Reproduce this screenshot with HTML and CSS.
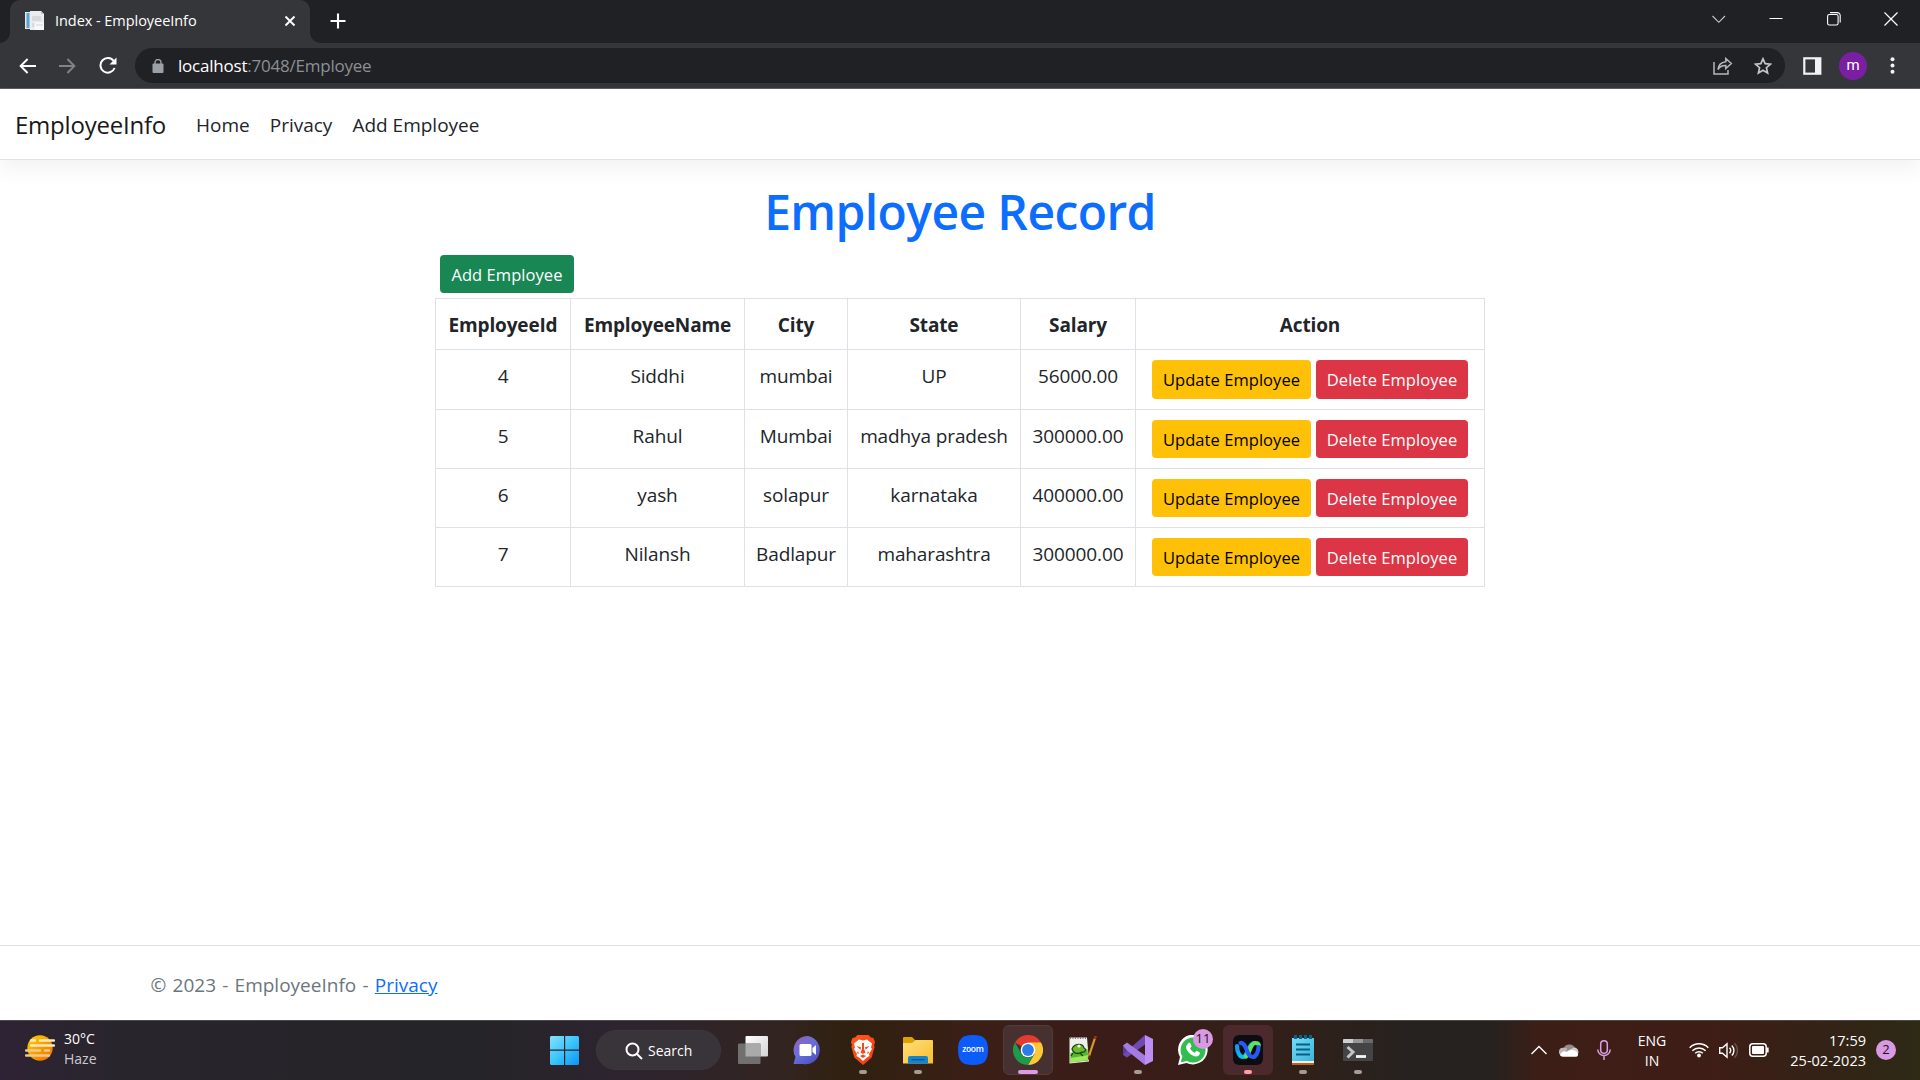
FILE: index.html
```html
<!DOCTYPE html>
<html lang="en">
<head>
<meta charset="utf-8">
<title>Index - EmployeeInfo</title>
<link rel="stylesheet" href="styles.css">
</head>
<body>
<div class="tabstrip">
  <div class="tab">
    <svg class="favicon" width="20" height="20" viewBox="0 0 20 20"><path d="M0 1h5v17H0z" fill="#dfe9ee"/><path d="M1.500 2h3v15h-3z" fill="#5aa3cf"/><path d="M5 0h11l3 3v16H5z" fill="#ececee"/><path d="M16 0v3h3z" fill="#bfc3c8"/><path d="M7 5h9v5H7zM7 12h3v4H7z" fill="#d7d9dd"/><path d="M9.500 11.500H19V19H9.500z" fill="#f8f8f8"/><path d="M11 14h7" stroke="#d0d3d8"/></svg>
    <span class="tab-title">Index - EmployeeInfo</span>
    <svg class="tab-close" width="12" height="12" viewBox="0 0 12 12"><path d="M1.500 1.500l9 9M10.500 1.500l-9 9" stroke="#fff" stroke-width="1.900"/></svg>
  </div>
  <svg class="new-tab" width="16" height="16" viewBox="0 0 16 16"><path d="M8 .5v15M.5 8h15" stroke="#fff" stroke-width="2.100"/></svg>
  <div class="window-controls">
    <svg width="14" height="14" viewBox="0 0 14 14"><path d="M.5 4l6.300 6.300L13 4" fill="none" stroke="#c9cacc" stroke-width="1.100"/></svg>
    <svg width="14" height="14" viewBox="0 0 14 14"><path d="M.5 6.500h13" stroke="#fff"/></svg>
    <svg width="14" height="14" viewBox="0 0 14 14"><rect x=".6" y="2.500" width="10.500" height="10.500" rx="1.800" fill="none" stroke="#fff" stroke-width="1.100"/><path d="M3 .6h7.200a3 3 0 0 1 3 3v7" fill="none" stroke="#fff" stroke-width="1.100"/></svg>
    <svg width="14" height="14" viewBox="0 0 14 14"><path d="M.5.5l13 13M13.500.5l-13 13" stroke="#fff" stroke-width="1.200"/></svg>
  </div>
</div>
<div class="toolbar">
  <svg class="nav-icon" width="17" height="16" viewBox="0 0 17 16"><path d="M17 8H1.600M8.600 1L1.600 8l7 7" fill="none" stroke="#fff" stroke-width="1.900"/></svg>
  <svg class="nav-icon forward" width="17" height="16" viewBox="0 0 17 16"><path d="M0 8h15.400M8.400 1l7 7-7 7" fill="none" stroke="#828386" stroke-width="1.900"/></svg>
  <svg class="nav-icon reload" width="18" height="17" viewBox="0 0 18 17"><path d="M14.800 4.200A7.300 7.300 0 1 0 15.600 11" fill="none" stroke="#fff" stroke-width="2"/><path d="M17.500.5v7h-7z" fill="#fff"/></svg>
  <div class="omnibox">
    <svg width="12" height="14" viewBox="0 0 12 14"><rect x=".5" y="4.500" width="11" height="9.500" rx="1" fill="#9aa0a6"/><path d="M3 5V3.500a3 3 0 0 1 6 0V5" fill="none" stroke="#9aa0a6" stroke-width="1.400"/></svg>
    <span class="url"><b>localhost</b>:7048/Employee</span>
    <svg class="share" width="20" height="18" viewBox="0 0 20 18"><path d="M1 5v12h14v-4" fill="none" stroke="#b5b7ba" stroke-width="1.500"/><path d="M12.800 1.500L18.300 6.500l-5.500 5V8.600C9 8.500 6.600 9.800 5 12.500c.4-4.500 3-7.200 7.800-7.800z" fill="none" stroke="#b5b7ba" stroke-width="1.500"/></svg>
    <svg class="star" width="18" height="18" viewBox="0 0 18 18"><path d="M9 1.800l2.150 4.900 5.250.5-4 3.500 1.200 5.200L9 13.200l-4.600 2.700 1.200-5.200-4-3.500 5.250-.5z" fill="none" stroke="#c3c5c8" stroke-width="1.700"/></svg>
  </div>
  <svg class="panel" width="19" height="18" viewBox="0 0 19 18"><rect x="1.300" y="1.300" width="16" height="15.400" fill="none" stroke="#f1f3f4" stroke-width="2.200"/><path d="M12 1h6v16h-6z" fill="#f1f3f4"/></svg>
  <span class="avatar">m</span>
  <svg class="dots" width="5" height="17" viewBox="0 0 5 17"><g fill="#f1f3f4"><circle cx="2.500" cy="2.200" r="2"/><circle cx="2.500" cy="8.500" r="2"/><circle cx="2.500" cy="14.800" r="2"/></g></svg>
</div>

<div class="page">
  <header class="navbar">
    <a class="brand">EmployeeInfo</a>
    <a class="link">Home</a>
    <a class="link">Privacy</a>
    <a class="link">Add Employee</a>
  </header>
  <main class="content">
    <h1>Employee Record</h1>
    <a class="btn success">Add Employee</a>
    <table>
      <colgroup><col class="c-id"><col class="c-name"><col class="c-city"><col class="c-state"><col class="c-salary"><col class="c-action"></colgroup>
      <thead><tr><th>EmployeeId</th><th>EmployeeName</th><th>City</th><th>State</th><th>Salary</th><th>Action</th></tr></thead>
      <tbody>
        <tr><td>4</td><td>Siddhi</td><td>mumbai</td><td>UP</td><td>56000.00</td><td class="actions"><a class="btn warning">Update Employee</a><a class="btn danger">Delete Employee</a></td></tr>
        <tr><td>5</td><td>Rahul</td><td>Mumbai</td><td>madhya pradesh</td><td>300000.00</td><td class="actions"><a class="btn warning">Update Employee</a><a class="btn danger">Delete Employee</a></td></tr>
        <tr><td>6</td><td>yash</td><td>solapur</td><td>karnataka</td><td>400000.00</td><td class="actions"><a class="btn warning">Update Employee</a><a class="btn danger">Delete Employee</a></td></tr>
        <tr><td>7</td><td>Nilansh</td><td>Badlapur</td><td>maharashtra</td><td>300000.00</td><td class="actions"><a class="btn warning">Update Employee</a><a class="btn danger">Delete Employee</a></td></tr>
      </tbody>
    </table>
  </main>
  <footer class="footer">© 2023 - EmployeeInfo - <a class="foot-link">Privacy</a></footer>
</div>

<div class="taskbar">
  <div class="weather">
    <svg width="30" height="26" viewBox="0 0 30 26"><defs><linearGradient id="sun" x1="0" y1="0" x2="1" y2="1"><stop offset=".15" stop-color="#fcc400"/><stop offset="1" stop-color="#ec6a00"/></linearGradient></defs><circle cx="15" cy="13" r="12.700" fill="url(#sun)"/><g stroke-width="2.400" stroke-linecap="round" fill="none"><path d="M6 5.500h4M15 5.500h14M6 10.500h23" stroke="#fbe9bd"/><path d="M1 15.500h14M20 15.500h4M1 20.500h23" stroke="#efc98c"/></g></svg>
    <div class="weather-text"><span>30°C</span><span class="dim">Haze</span></div>
  </div>
  <div class="apps">
    <svg class="start" width="30" height="30" viewBox="0 0 30 30"><defs><linearGradient id="win" x1="0" y1="0" x2="1" y2="1"><stop offset="0" stop-color="#84e2ff"/><stop offset=".5" stop-color="#3cc4fb"/><stop offset="1" stop-color="#0c94f6"/></linearGradient></defs><path d="M1 1H14V14.500H0V2zM15.200 1h12.800l1 1V14.500H15.200zM0 15.700h14v14.200H1l-1-1zM15.200 15.700H29v13.200l-1 1H15.200z" fill="url(#win)"/></svg>
    <div class="search"><svg width="18" height="18" viewBox="0 0 18 18"><circle cx="7.500" cy="7.500" r="6" fill="none" stroke="#fff" stroke-width="2"/><path d="M12 12l5 5" stroke="#fff" stroke-width="2"/></svg><span>Search</span></div>
    <div class="slot"><svg width="30" height="30" viewBox="0 0 30 30"><defs><linearGradient id="tv" x1="0" y1="0" x2="1" y2="1"><stop offset="0" stop-color="#fff"/><stop offset="1" stop-color="#d4d4d4"/></linearGradient></defs><rect x="7.500" y="1" width="22.500" height="20.500" rx="1" fill="url(#tv)"/><rect x="0" y="8.500" width="22.500" height="20.500" rx="1" fill="#707070"/><path d="M7.500 8.500h15v13h-15z" fill="#aaa"/></svg></div>
    <div class="slot"><svg width="30" height="30" viewBox="0 0 30 30"><defs><linearGradient id="chat" x1="0" y1="0" x2=".8" y2="1"><stop offset="0" stop-color="#9a5fb5"/><stop offset=".5" stop-color="#6a6fd8"/><stop offset="1" stop-color="#4a52c0"/></linearGradient></defs><path d="M15 1a14 14 0 1 1-5 28H.5l2-7A14 14 0 0 1 15 1z" fill="url(#chat)"/><rect x="6.500" y="9" width="12" height="12" rx="1.500" fill="#fff"/><path d="M19.500 13l3.500-3v10l-3.500-3z" fill="#fff"/></svg></div>
    <div class="slot run"><svg width="30" height="30" viewBox="0 0 30 30"><defs><linearGradient id="brv" x1="0" y1="0" x2="1" y2="1"><stop offset="0" stop-color="#ff5a1c"/><stop offset="1" stop-color="#f23a12"/></linearGradient></defs><path d="M9.500 0h11l2.500 2.500 2.500.5 1.500 4-1 3.500.7 1-3 11-8.700 7.500-8.700-7.500-3-11 .7-1L3 7l1.500-4 2.500-.5z" fill="url(#brv)"/><path d="M15 5.500l4-1 5 4-1 4 1 1.500-3 5 .5 2-2.500 1.500L15 26l-4-3.500L8.500 21l.5-2-3-5L7 12.500 6 8.500l5-4z" fill="#fff"/><path d="M8.500 11l4.500 1.200-.6 2.600zM21.500 11L17 12.200l.6 2.600zM14 8h2v6l1.500 3.500L15 19l-2.500-1.500L14 14zM12 21l3-1.500 3 1.500-3 2zM10 16l1 3-2-1zM20 16l-1 3 2-1z" fill="#f4481b"/></svg></div>
    <div class="slot run"><svg width="30" height="30" viewBox="0 0 30 30"><defs><linearGradient id="fold" x1="0" y1="0" x2="1" y2="1"><stop offset="0" stop-color="#ffe07a"/><stop offset="1" stop-color="#f9bd2d"/></linearGradient></defs><path d="M0 3a1 1 0 0 1 1-1h8l3.500 3.500L9 9H0z" fill="#dfa000"/><path d="M0 8h9l3.500-3H29a1 1 0 0 1 1 1v22.500H0z" fill="url(#fold)"/><path d="M5 28.500V23a2 2 0 0 1 2-2h16a2 2 0 0 1 2 2v5.500z" fill="#1683cf"/><path d="M8.500 24.700h13" stroke="#075188" stroke-width="1.200"/></svg></div>
    <div class="slot"><svg width="30" height="30" viewBox="0 0 30 30"><path d="M15 0C26 0 30 4 30 15s-4 15-15 15S0 26 0 15 4 0 15 0z" fill="#0c5cfc"/><text x="15" y="17.300" text-anchor="middle" textLength="21.500" class="zoom-word">zoom</text></svg></div>
    <div class="slot active"><svg width="30" height="30" viewBox="0 0 30 30"><path d="M15 15L2 7.500A15 15 0 0 1 28 7.500z" fill="#e33b2e"/><path d="M15 7.500h13A15 15 0 0 1 15 30l6.500-11.200z" fill="#fcc934"/><path d="M2 7.500l6.500 11.300A7.500 7.500 0 0 0 21.500 18.800L15 30A15 15 0 0 1 2 7.500z" fill="#1e9a4a"/><circle cx="15" cy="15" r="7.300" fill="#fff"/><circle cx="15" cy="15" r="5.900" fill="#2b7de9"/></svg></div>
    <div class="slot"><svg width="30" height="30" viewBox="0 0 30 30"><path d="M1.500 2.500h17.500l2 24-19.500 2z" fill="#eef0ea"/><path d="M2.500 18l17-4 1 11.500-18 2z" fill="#56b62e"/><path d="M2.500 23l18-3v5l-18 2.500z" fill="#a1e65e"/><path d="M2 3h16" stroke="#777" stroke-width="2" stroke-dasharray="1 1.500"/><path d="M4 14c2-6 11-6 12-1 3 1 1 5-2 4-5 3-9 1-10-3zM5 18l-2 3M12 18l3 3" fill="#6dbd2a" stroke="#18420e" stroke-width="1.200"/><circle cx="11" cy="11" r="1.600" fill="#fff"/><path d="M27.500 1.500L22 18l-1.500 5" stroke="#d99a22" stroke-width="2.200" fill="none"/><path d="M27.600 1l-1 3" stroke="#9b2b20" stroke-width="2.200"/><path d="M21.500 20.500l-1 4" stroke="#463016" stroke-width="1.500"/></svg></div>
    <div class="slot run"><svg width="30" height="30" viewBox="0 0 30 30"><path d="M0 10.500L4 8v14.500L0 20z" fill="#5a3b9c"/><path d="M0 19.500L22 0v9.500L4 22.500z" fill="#7049b4"/><path d="M0 10.500L4 7.500 22 20.500V30L4 15.500z" fill="#a57be0"/><path d="M22 0l8 4v22l-8 4z" fill="#bd8ff6"/></svg></div>
    <div class="slot"><svg width="30" height="30" viewBox="0 0 30 30"><path d="M0 30l2-8A14.800 14.800 0 1 1 8.500 28z" fill="#fff"/><path d="M2.700 27.300l1.700-5.700A12.500 12.500 0 1 1 9 26z" fill="#31bd4f"/><path d="M10 8.500c1-1 2-.8 2.600.3l1 2.500-1.500 2c1 2 2.500 3.500 4.700 4.500l1.800-2 3.200 1.600c.7.600-.5 3.400-2.600 3.900C14 22.300 7 15 8.200 11.200z" fill="#fff"/></svg><span class="badge count">11</span></div>
    <div class="slot alert"><svg width="30" height="30" viewBox="0 0 30 30"><defs><linearGradient id="wa" x1="0" y1="0" x2="1" y2="1"><stop offset="0" stop-color="#1590f0"/><stop offset="1" stop-color="#10d5e6"/></linearGradient></defs><rect width="30" height="30" rx="6" fill="#0b0d10"/><g fill="none" stroke-width="4.200" stroke-linecap="round"><path d="M4 11c0 5.500 2.500 11 6 11 4.500 0 5-13.500 11-14" stroke="url(#wa)"/><path d="M13 21.500c4-3 4-13.500 9.500-13.500 2 0 3 1 3.300 2" stroke="#5fe35f"/><path d="M7.500 8c6-1 6 14 12 14 3.500 0 6-5 6-10" stroke="#2858f5"/></g></svg></div>
    <div class="slot run"><svg width="30" height="30" viewBox="0 0 30 30"><defs><linearGradient id="np" x1="0" y1="0" x2="1" y2="1"><stop offset="0" stop-color="#72dcf5"/><stop offset="1" stop-color="#3db4dc"/></linearGradient></defs><path d="M4 27h22v3H4z" fill="#bd6217"/><path d="M4 26h22v2H4z" fill="#eee"/><path d="M4 3h22v23H4z" fill="url(#np)"/><path d="M8 9.500h14M8 14.500h14M8 19.500h14" stroke="#075f83" stroke-width="1.900"/><path d="M7.500 0v4M12.500 0v4M17.500 0v4M22.500 0v4" stroke="#08648a" stroke-width="3"/></svg></div>
    <div class="slot run"><svg width="30" height="30" viewBox="0 0 30 30"><rect y="4" width="30" height="22" rx="1" fill="#444447"/><path d="M0 8V5a1 1 0 0 1 1-1h9v4z" fill="#cfcfd1"/><path d="M10 4h10v4H10z" fill="#97979a"/><path d="M20 4h9a1 1 0 0 1 1 1v3H20z" fill="#6a6a6e"/><path d="M4.500 12l5.500 5-5.500 5.500" fill="none" stroke="#c4c4c4" stroke-width="3"/><path d="M13 21.500h10" stroke="#f5f5f5" stroke-width="2.800"/></svg></div>
  </div>
  <div class="tray">
    <svg width="16" height="10" viewBox="0 0 16 10"><path d="M.5 9L8 1.500 15.500 9" fill="none" stroke="#fff" stroke-width="1.400"/></svg>
    <svg class="t-cloud" width="20" height="14" viewBox="0 0 20 14"><path d="M4.500 6a6 5.500 0 0 1 11.500-1L9 10z" fill="#958b89"/><path d="M15 4.500A4.500 4.500 0 0 1 17 13L8 8z" fill="#d3cfce"/><path d="M4.500 4.800a4.500 4.500 0 0 1 4 1.200l-6 6.500a4 4 0 0 1 2-7.700z" fill="#bdb8b6"/><path d="M1 12c1-3 4-4.500 7-3.500l3.500-1.300c3-.6 6.500 1 7.500 3.800.3 1.500-.5 2.700-2 2.700H4c-1.500 0-2.500-.7-3-1.700z" fill="#fff"/></svg>
    <svg class="t-mic" width="14" height="20" viewBox="0 0 14 20"><rect x="3.700" y=".8" width="6.600" height="12.400" rx="3.300" fill="none" stroke="#d9a0e6" stroke-width="1.500"/><path d="M.8 9.500a6.200 6 0 0 0 12.400 0M7 15.500V20" fill="none" stroke="#d9a0e6" stroke-width="1.500"/></svg>
    <div class="lang"><span>ENG</span><span>IN</span></div>
    <svg class="t-wifi" width="20" height="16" viewBox="0 0 20 16"><g fill="none" stroke="#fff" stroke-width="1.500"><path d="M.7 5.700a13 13 0 0 1 18.600 0M3.400 8.700a9.300 9.300 0 0 1 13.200 0M6.200 11.300a5.500 5.500 0 0 1 7.600 0"/></g><circle cx="10" cy="13.500" r="1.900" fill="#fff"/></svg>
    <svg class="t-sound" width="20" height="17" viewBox="0 0 20 17"><g fill="none" stroke="#fff" stroke-width="1.400"><path d="M.7 5.700H3.500L8 1.700v13.600l-4.500-4H.7z"/><path d="M10.500 5.800a4 4 0 0 1 0 5.400M12.800 3.400a7.200 7.200 0 0 1 0 10.200"/><path d="M15.500 1.200a10.500 10.500 0 0 1 0 14.600" stroke="#6a534e"/></g></svg>
    <svg class="t-battery" width="20" height="14" viewBox="0 0 20 14"><rect x=".8" y=".8" width="16.400" height="12.400" rx="3" fill="none" stroke="#fff" stroke-width="1.500"/><rect x="3" y="3" width="12" height="8" rx="1" fill="#fff"/><path d="M18.800 4.500v5" stroke="#fff" stroke-width="1.700"/></svg>
    <div class="clock"><span>17:59</span><span>25-02-2023</span></div>
    <span class="count notif">2</span>
  </div>
</div>
</body>
</html>
```
FILE: styles.css
```css
* { box-sizing: border-box; }
body { margin: 0; width: 1920px; height: 1080px; overflow: hidden; display: flex; flex-direction: column; background: #fff; color: #212529; font-family: "Open Sans", sans-serif; }
svg { display: block; flex: none; }

/* Browser chrome */
.tabstrip { flex: none; height: 43px; background: #202124; display: flex; align-items: flex-start; }
.tab { position: relative; width: 300px; height: 43px; margin-left: 10px; padding: 0 14px 0 15px; background: #35363a; border-radius: 10px 10px 0 0; display: flex; align-items: center; color: #fff; font-size: 14.500px; }
.tab::before, .tab::after { content: ""; position: absolute; bottom: 0; width: 10px; height: 10px; }
.tab::before { left: -10px; background: radial-gradient(circle at 0 0, #202124 9.5px, #35363a 10px); }
.tab::after { right: -10px; background: radial-gradient(circle at 100% 0, #202124 9.5px, #35363a 10px); }
.tab-title { margin-left: 10px; letter-spacing: -.05px; line-height: 20px; }
.favicon, .tab-title, .tab-close { margin-top: -2px; }
.tab-close { margin-left: auto; }
.new-tab { margin: 13px 0 0 20px; }
.window-controls { margin: 12px 22px 0 auto; display: flex; gap: 43.300px; }
.toolbar { flex: none; height: 46px; background: #35363a; border-bottom: 1px solid #5c5d60; display: flex; align-items: center; }
.nav-icon { margin-left: 19px; }
.nav-icon.forward, .nav-icon.reload { margin-left: 23px; }
.omnibox { width: 1650px; height: 35px; margin-left: 18px; padding: 0 13px 0 17px; border-radius: 18px; background: #202124; display: flex; align-items: center; }
.url { margin-left: 14px; color: #8c9094; font-size: 17px; letter-spacing: -.22px; line-height: 24px; }
.url b { font-weight: 400; color: #fff; }
.share { margin-left: auto; }
.star { margin-left: 21px; }
.panel { margin-left: 18px; }
.avatar { width: 28px; height: 28px; margin-left: 17px; border-radius: 50%; background: #7b1fa2; color: #fff; font: 15px/26px Roboto, sans-serif; text-align: center; }
.dots { margin-left: 23px; }

/* Page */
.page { flex: 1; display: flex; flex-direction: column; }
.navbar { height: 71px; padding: 2px 15px 0; border-bottom: 1px solid #dee2e6; box-shadow: 0 10px 20px rgba(0, 0, 0, .05); display: flex; align-items: center; color: #212529; font-size: 19px; }
.brand { margin-top: -2px; font-size: 24px; letter-spacing: -.22px; color: #18191a; }
.link { margin-left: 20px; }
.brand + .link { margin-left: 30px; }
.content { flex: 1; width: 1050px; margin: 0 auto; }
h1 { margin: 22px 0 13px; color: #0d6efd; font-size: 48px; font-weight: 600; letter-spacing: -.6px; line-height: 60px; text-align: center; }
.btn { display: inline-block; height: 38px; padding: 6px 10px; border-radius: 4px; font-size: 16.500px; letter-spacing: .06px; line-height: 27px; white-space: nowrap; text-align: center; }
.success { width: 134px; display: block; margin: 0 0 5px 5px; background: #198754; color: #fff; }
.warning { background: #ffc107; color: #000; width: 159px; }
.danger { background: #dc3545; color: #fff; width: 152px; margin-left: 5px; }
table { width: 1050px; table-layout: fixed; border-collapse: collapse; font-size: 19px; letter-spacing: -.12px; line-height: 30px; text-align: center; }
th, td { border: 1px solid #dee2e6; padding: 11px 0 9px; vertical-align: top; white-space: nowrap; }
.actions { padding: 10px 0; }
th { font-weight: 700; letter-spacing: -.15px; }
.c-id { width: 135px; }
.c-name { width: 174px; }
.c-city { width: 103px; }
.c-state { width: 173px; }
.c-salary { width: 115px; }
td .btn { vertical-align: top; }
tbody tr:first-child .btn { height: 39px; }
.footer { height: 75px; padding-left: 150.500px; border-top: 1px solid #dee2e6; color: #6c757d; font-size: 19px; word-spacing: 1.300px; line-height: 78px; white-space: pre; }
.foot-link { color: #0d6efd; text-decoration: underline; }

/* Taskbar */
.taskbar { flex: none; height: 60px; border-top: 1px solid #4a4948; display: flex; color: #fff; font-size: 14px; line-height: 20px; background: linear-gradient(90deg, #2e2334 0, #28252c 130px, #252428 480px, #2d2430 620px, #32241f 790px, #30200f 850px, #3b1f17 980px, #3b1c18 1130px, #302019 1300px, #26221f 1410px, #26221f 1490px, #3d1e17 1540px, #3f1d17 1700px, #342216 1820px, #2d2a16 1920px); }
.weather { width: 550px; padding: 7px 0 0 25px; display: flex; gap: 9px; }
.weather svg { margin-top: 7px; }
.weather-text, .lang, .clock { display: flex; flex-direction: column; padding-top: 2px; }
.weather-text { padding-top: 1px; }
.dim { color: #cdc9cf; }
.apps { display: flex; align-items: center; gap: 5px; height: 58px; }
.start { margin-right: 11px; }
.search { width: 125px; height: 40px; margin-right: 2px; padding: 1px 0 0 28px; border-radius: 20px; border: 1px solid #3d373d; background: #39333a; display: flex; align-items: center; gap: 5px; }
.slot { position: relative; width: 50px; height: 50px; border-radius: 6px; display: flex; align-items: center; justify-content: center; }
.active { background: #463130; border: 1px solid #513c3b; }
.alert { background: #4b292c; }
.run::after, .active::after, .alert::after { content: ""; position: absolute; bottom: 1px; left: 21px; width: 8px; height: 4px; border-radius: 2px; background: #a49b98; }
.active::after { left: 14px; bottom: 0; width: 20px; background: #dc9be6; }
.alert::after { background: #ff9da9; }
.zoom-word { fill: #fff; font: 600 8.500px "Open Sans", sans-serif; }
.count { width: 20px; height: 20px; border-radius: 50%; background: #d99ae4; color: #1d1020; text-align: center; font-size: 13px; line-height: 19px; }
.badge { position: absolute; left: 25px; top: 4px; }
.tray { flex: 1; display: flex; height: 58px; align-items: center; margin-left: 148px; }
.t-cloud { margin-left: 12px; }
.t-mic { margin-left: 18px; }
.lang { width: 40px; margin-left: 21px; text-align: center; }
.t-wifi { margin-left: 17px; }
.t-sound { margin-left: 10px; }
.t-battery { margin-left: 10px; }
.clock { width: 82px; margin-left: 15px; font-size: 14.500px; letter-spacing: 0; text-align: right; }
.notif { margin-left: 10px; }
```
